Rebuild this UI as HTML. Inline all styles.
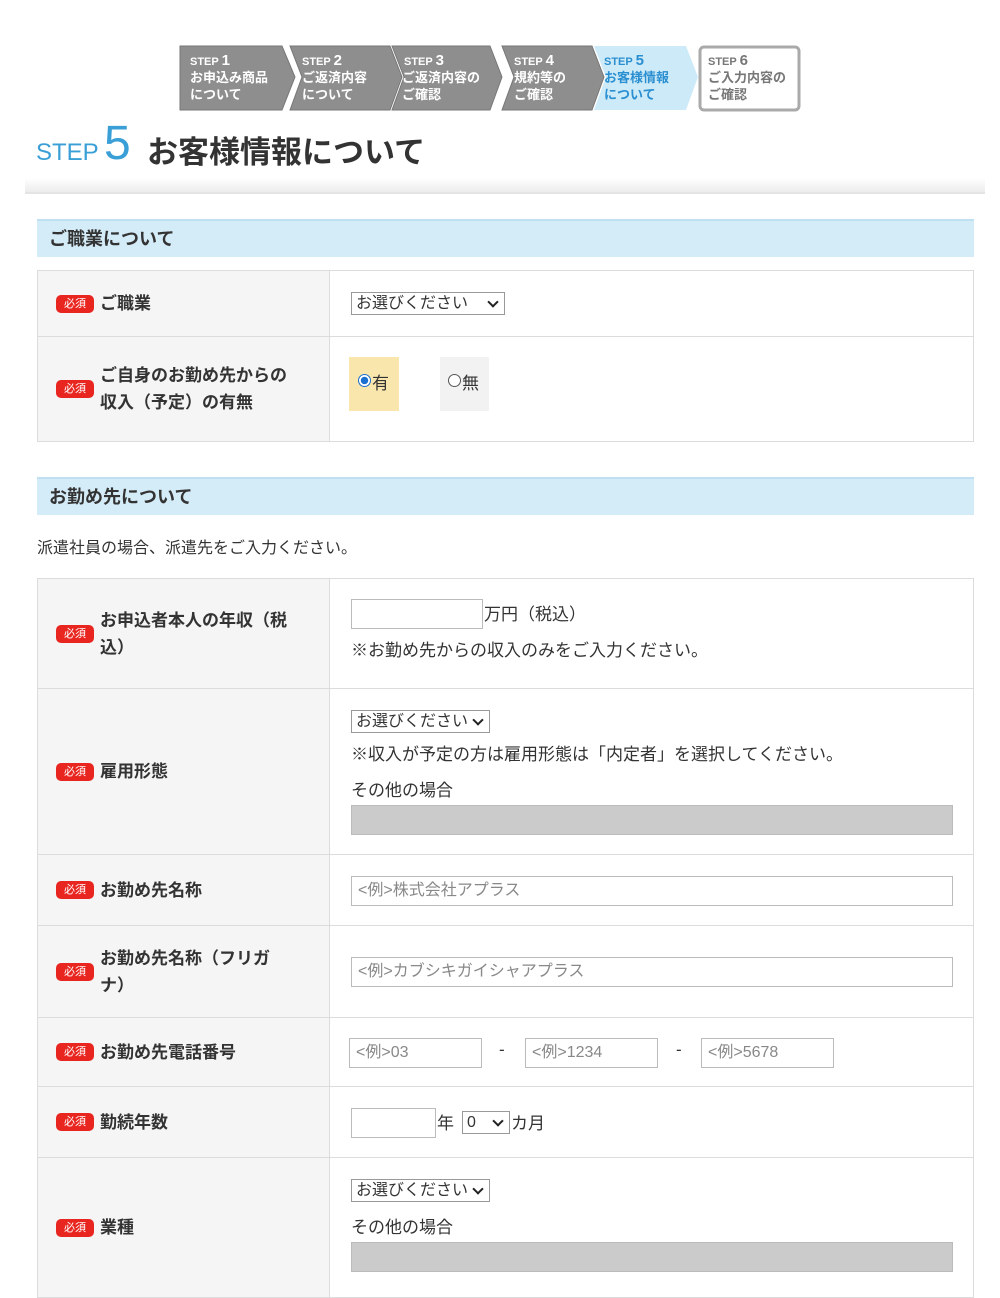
<!DOCTYPE html>
<html><head><meta charset="utf-8"><style>
*{box-sizing:border-box;margin:0;padding:0}
body{width:1000px;height:1293px;background:#fff;font-family:"Liberation Sans","Noto Sans CJK JP",sans-serif;color:#333;position:relative;overflow:hidden}
.a{position:absolute}
.hdr{position:absolute;left:37px;width:937px;height:38px;background:#d4ecf8;border-top:2px solid #bfe0f2;font-size:18px;font-weight:bold;padding:4px 12px;color:#333}
.row{position:absolute;left:37px;width:937px;border:1px solid #dcdcdc;border-top:none}
.row.first{border-top:1px solid #dcdcdc}
.lab{position:absolute;left:0;top:0;bottom:0;width:292px;background:#f5f5f5;border-right:1px solid #dcdcdc;display:flex;align-items:center;padding-left:18px;font-size:17px;font-weight:bold;line-height:27px}
.req{display:inline-block;flex:none;width:38px;height:18px;border-radius:5px;background:#e8251f;color:#fff;font-size:11px;font-weight:normal;text-align:center;line-height:18px;margin-right:6px}
.fld{position:absolute;font-size:17px;color:#333}
.sel{position:absolute;height:23px;border:1px solid #999;background:#fff;font-size:16px;padding:0 4px;line-height:21px}
.sel:after{content:"";position:absolute;right:7px;top:5px;width:6px;height:6px;border-right:2px solid #222;border-bottom:2px solid #222;transform:rotate(45deg)}
.inp{position:absolute;height:30px;border:1px solid #bbb;background:#fff;font-size:16px;color:#888;padding:0 6px;line-height:28px}
.gray{position:absolute;height:30px;background:#cbcbcb;border:1px solid #bbb}
</style></head><body>
<svg class="a" style="left:178px;top:44px" width="625" height="68">
<g font-family="Liberation Sans,Noto Sans CJK JP,sans-serif" font-weight="bold">
<polygon points="2,2 104,2 117,33 104,66 2,66" fill="#8e8e8e" stroke="#777"/>
<polygon points="112,2 212,2 224,33 212,66 112,66 124,33" fill="#8e8e8e" stroke="#777"/>
<polygon points="214,2 312,2 324,33 312,66 214,66 226,33" fill="#8e8e8e" stroke="#777"/>
<polygon points="324,2 414,2 426,33 414,66 324,66 336,33" fill="#8e8e8e" stroke="#777"/>
<polygon points="416,2 508,2 520,33 508,66 416,66 428,33" fill="#cdeaf8"/>
<rect x="522" y="3" width="99" height="63" rx="4" fill="#fff" stroke="#aaa" stroke-width="3"/>
<g fill="#fff" font-size="13">
<text x="12" y="21" font-size="11">STEP <tspan font-size="15">1</tspan></text><text x="12" y="38">お申込み商品</text><text x="12" y="55">について</text>
<text x="124" y="21" font-size="11">STEP <tspan font-size="15">2</tspan></text><text x="124" y="38">ご返済内容</text><text x="124" y="55">について</text>
<text x="226" y="21" font-size="11">STEP <tspan font-size="15">3</tspan></text><text x="224" y="38">ご返済内容の</text><text x="224" y="55">ご確認</text>
<text x="336" y="21" font-size="11">STEP <tspan font-size="15">4</tspan></text><text x="336" y="38">規約等の</text><text x="336" y="55">ご確認</text>
</g>
<g fill="#2a8fd0" font-size="13"><text x="426" y="21" font-size="11">STEP <tspan font-size="15">5</tspan></text><text x="426" y="38">お客様情報</text><text x="426" y="55">について</text></g>
<g fill="#777" font-size="13"><text x="530" y="21" font-size="11">STEP <tspan font-size="15">6</tspan></text><text x="530" y="38">ご入力内容の</text><text x="530" y="55">ご確認</text></g>
</g></svg>
<div class="a" style="left:36px;top:139px;font-size:24px;color:#3a9fd6">STEP</div>
<div class="a" style="left:104px;top:116px;font-size:48px;color:#3a9fd6">5</div>
<div class="a" style="left:147px;top:127px;font-size:31px;font-weight:bold;color:#333">お客様情報について</div>
<div class="a" style="left:25px;top:178px;width:960px;height:14px;background:linear-gradient(#fff,#ececec)"></div>
<div class="a" style="left:25px;top:192px;width:960px;height:2px;background:#e4e4e4"></div>

<div class="hdr" style="top:219px">ご職業について</div>
<div class="row first" style="top:270px;height:67px"><div class="lab"><span class="req">必須</span>ご職業</div></div>
<div class="sel" style="left:351px;top:292px;width:154px">お選びください</div>
<div class="row" style="top:337px;height:105px"><div class="lab"><span class="req">必須</span>ご自身のお勤め先からの<br>収入（予定）の有無</div></div>
<div class="a" style="left:349px;top:357px;width:50px;height:54px;background:#f8e6ac"></div>
<div class="a" style="left:440px;top:357px;width:49px;height:54px;background:#f2f2f2"></div>
<div class="a" style="left:358px;top:374px;width:13px;height:13px;border-radius:50%;border:1px solid #1a6fd0;background:radial-gradient(#1a6fd0 45%,#fff 50%)"></div>
<div class="fld" style="left:372px;top:369px">有</div>
<div class="a" style="left:448px;top:374px;width:13px;height:13px;border-radius:50%;border:1px solid #555;background:#fff"></div>
<div class="fld" style="left:462px;top:369px">無</div>

<div class="hdr" style="top:477px">お勤め先について</div>
<div class="fld" style="left:37px;top:534px;font-size:16px">派遣社員の場合、派遣先をご入力ください。</div>

<div class="row first" style="top:578px;height:111px"><div class="lab"><span class="req">必須</span>お申込者本人の年収（税<br>込）</div></div>
<div class="inp" style="left:351px;top:599px;width:132px"></div>
<div class="fld" style="left:484px;top:600px">万円（税込）</div>
<div class="fld" style="left:351px;top:636px">※お勤め先からの収入のみをご入力ください。</div>

<div class="row" style="top:689px;height:166px"><div class="lab"><span class="req">必須</span>雇用形態</div></div>
<div class="sel" style="left:351px;top:710px;width:139px">お選びください</div>
<div class="fld" style="left:351px;top:740px">※収入が予定の方は雇用形態は「内定者」を選択してください。</div>
<div class="fld" style="left:351px;top:776px">その他の場合</div>
<div class="gray" style="left:351px;top:805px;width:602px"></div>

<div class="row" style="top:855px;height:71px"><div class="lab"><span class="req">必須</span>お勤め先名称</div></div>
<div class="inp" style="left:351px;top:876px;width:602px">&lt;例&gt;株式会社アプラス</div>

<div class="row" style="top:926px;height:92px"><div class="lab"><span class="req">必須</span>お勤め先名称（フリガ<br>ナ）</div></div>
<div class="inp" style="left:351px;top:957px;width:602px">&lt;例&gt;カブシキガイシャアプラス</div>

<div class="row" style="top:1018px;height:69px"><div class="lab"><span class="req">必須</span>お勤め先電話番号</div></div>
<div class="inp" style="left:349px;top:1038px;width:133px">&lt;例&gt;03</div>
<div class="fld" style="left:499px;top:1040px">-</div>
<div class="inp" style="left:525px;top:1038px;width:133px">&lt;例&gt;1234</div>
<div class="fld" style="left:676px;top:1040px">-</div>
<div class="inp" style="left:701px;top:1038px;width:133px">&lt;例&gt;5678</div>

<div class="row" style="top:1087px;height:71px"><div class="lab"><span class="req">必須</span>勤続年数</div></div>
<div class="inp" style="left:351px;top:1108px;width:85px"></div>
<div class="fld" style="left:437px;top:1109px">年</div>
<div class="sel" style="left:462px;top:1111px;width:48px">0</div>
<div class="fld" style="left:511px;top:1109px">カ月</div>

<div class="row" style="top:1158px;height:140px"><div class="lab"><span class="req">必須</span>業種</div></div>
<div class="sel" style="left:351px;top:1179px;width:139px">お選びください</div>
<div class="fld" style="left:351px;top:1213px">その他の場合</div>
<div class="gray" style="left:351px;top:1242px;width:602px"></div>
</body></html>
